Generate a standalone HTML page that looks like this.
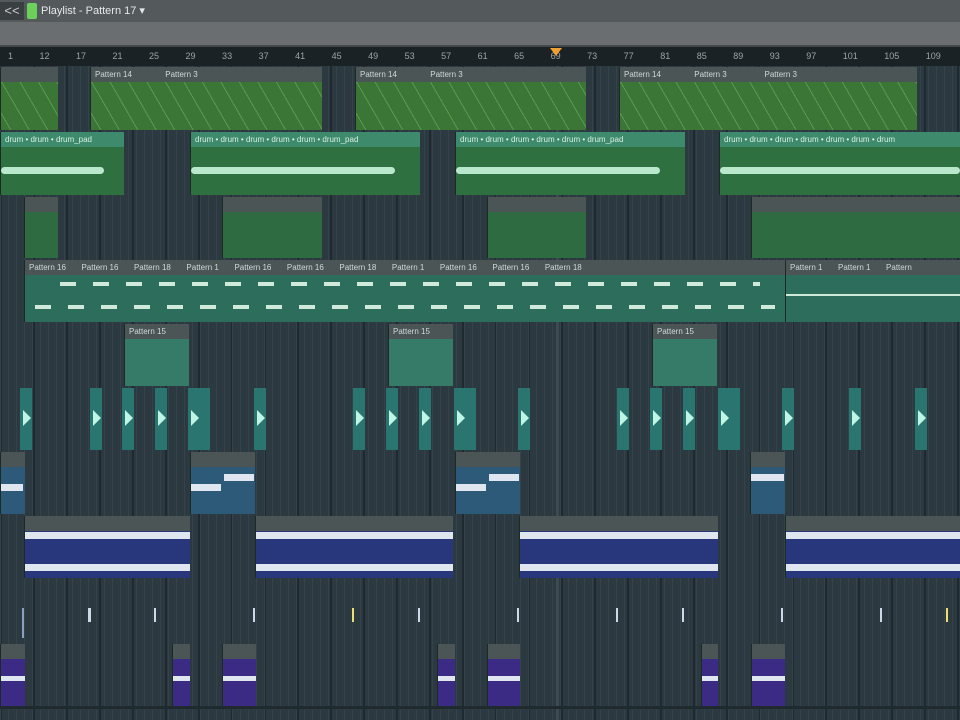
<!DOCTYPE html>
<html><head><meta charset="utf-8"><style>
*{margin:0;padding:0;box-sizing:border-box}
body{width:960px;height:720px;overflow:hidden;background:#2d3a41;font-family:"Liberation Sans",sans-serif;position:relative}
div{position:absolute}
.grid{left:0;top:66px;width:960px;height:654px;background:repeating-linear-gradient(90deg,#34434a 0 1px,transparent 1px 8px),repeating-linear-gradient(90deg,#1f2a30 0 2px,#2c3940 2px 33px)}
.rowsep{left:0;width:960px;height:2px;background:#1f2a2f}
.c{overflow:hidden;border-left:1px solid #1c2a25}
.h{left:0;top:0;right:0;height:15px;background:#4b5556;color:#cfd8dc;font-size:8px;line-height:15px;padding-left:4px;white-space:nowrap;overflow:hidden}
.g1{background:repeating-linear-gradient(60deg,#3b7636 0 8px,#5a9a50 8px 9px,#3b7636 9px 16px)}
.au{background:#2f7040}
.au .h{background:#3d8a6c;color:#d8f0e0}
.wv{left:0;right:0;top:35px;height:7px;background:#b9e8cc;border-radius:4px}
.g3{background:#2f6b40}
.t4{background:#2c6d5b}
.t5{background:#367a68}
.sm{background:#2a7570;width:12px;height:62px}
.sm:after{content:"";position:absolute;left:3px;top:22px;border-left:8px solid #bff5e4;border-top:8px solid transparent;border-bottom:8px solid transparent}
.b7{background:#2c5a78}
.b8{background:#28377c}
.p{background:#3b2b85}
.wb{background:#dfe6f0;height:7px}
.nt{background:#cfe9da;height:4px}
</style></head><body>
<div style="left:0;top:0;width:960px;height:22px;background:#54595c"></div>
<div style="left:0;top:2px;width:24px;height:18px;background:#3a3f42;color:#ccc;font-size:13px;line-height:18px;text-align:center">&lt;&lt;</div>
<div style="left:27px;top:3px;width:10px;height:16px;background:#6bd15a;border-radius:2px"></div>
<div style="left:41px;top:3px;color:#e6e8ea;font-size:11px;line-height:16px">Playlist - Pattern 17 ▾</div>
<div style="left:0;top:22px;width:960px;height:23px;background:#6a6e71"></div>
<div style="left:0;top:45px;width:960px;height:2px;background:#42474a"></div>
<div style="left:0;top:47px;width:960px;height:19px;background:#1a2226;color:#9aa4a8;font-size:9px;line-height:19px;white-space:nowrap;word-spacing:24px;padding-left:8px;overflow:hidden">1 12 17 21 25 29 33 37 41 45 49 53 57 61 65 69 73 77 81 85 89 93 97 101 105 109 113 117 121</div>
<div style="left:550px;top:48px;border-left:6px solid transparent;border-right:6px solid transparent;border-top:8px solid #f0a030"></div>
<div class="grid"></div>
<div style="left:556px;top:66px;width:3px;height:654px;background:#3d4a50"></div>

<!-- row1 -->
<div class="c g1" style="left:0;top:67px;width:58px;height:63px"><div class="h"></div></div>
<div class="c g1" style="left:90px;top:67px;width:232px;height:63px"><div class="h">Pattern 14 &nbsp; &nbsp; &nbsp; &nbsp; &nbsp; &nbsp; &nbsp; Pattern 3</div></div>
<div class="c g1" style="left:355px;top:67px;width:231px;height:63px"><div class="h">Pattern 14 &nbsp; &nbsp; &nbsp; &nbsp; &nbsp; &nbsp; &nbsp; Pattern 3</div></div>
<div class="c g1" style="left:619px;top:67px;width:298px;height:63px"><div class="h">Pattern 14 &nbsp; &nbsp; &nbsp; &nbsp; &nbsp; &nbsp; &nbsp; Pattern 3 &nbsp; &nbsp; &nbsp; &nbsp; &nbsp; &nbsp; &nbsp; &nbsp; Pattern 3</div></div>
<!-- row2 -->
<div class="c au" style="left:0;top:132px;width:124px;height:63px"><div class="h">drum • drum • drum_pad</div><div class="wv" style="right:20px"></div></div>
<div class="c au" style="left:190px;top:132px;width:230px;height:63px"><div class="h">drum • drum • drum • drum • drum • drum_pad</div><div class="wv" style="right:25px"></div></div>
<div class="c au" style="left:455px;top:132px;width:230px;height:63px"><div class="h">drum • drum • drum • drum • drum • drum_pad</div><div class="wv" style="right:25px"></div></div>
<div class="c au" style="left:719px;top:132px;width:241px;height:63px"><div class="h">drum • drum • drum • drum • drum • drum • drum</div><div class="wv"></div></div>
<!-- row3 -->
<div class="c g3" style="left:24px;top:197px;width:34px;height:61px"><div class="h"></div></div>
<div class="c g3" style="left:222px;top:197px;width:100px;height:61px"><div class="h"></div></div>
<div class="c g3" style="left:487px;top:197px;width:99px;height:61px"><div class="h"></div></div>
<div class="c g3" style="left:751px;top:197px;width:209px;height:61px"><div class="h"></div></div>
<!-- row4 -->
<div class="c t4" style="left:24px;top:260px;width:761px;height:62px"><div class="h">Pattern 16 &nbsp; &nbsp; &nbsp; Pattern 16 &nbsp; &nbsp; &nbsp; Pattern 18 &nbsp; &nbsp; &nbsp; Pattern 1 &nbsp; &nbsp; &nbsp; Pattern 16 &nbsp; &nbsp; &nbsp; Pattern 16 &nbsp; &nbsp; &nbsp; Pattern 18 &nbsp; &nbsp; &nbsp; Pattern 1 &nbsp; &nbsp; &nbsp; Pattern 16 &nbsp; &nbsp; &nbsp; Pattern 16 &nbsp; &nbsp; &nbsp; Pattern 18</div>
<div class="nt" style="left:35px;top:22px;width:700px;background:repeating-linear-gradient(90deg,#cfe9da 0 16px,transparent 16px 33px)"></div>
<div class="nt" style="left:10px;top:45px;width:740px;background:repeating-linear-gradient(90deg,#cfe9da 0 16px,transparent 16px 33px)"></div></div>
<div class="c t4" style="left:785px;top:260px;width:175px;height:62px"><div class="h">Pattern 1 &nbsp; &nbsp; &nbsp; Pattern 1 &nbsp; &nbsp; &nbsp; Pattern</div>
<div class="nt" style="left:0;top:34px;width:175px;height:2px"></div></div>
<!-- row5 -->
<div class="c t5" style="left:124px;top:324px;width:65px;height:62px"><div class="h">Pattern 15</div></div>
<div class="c t5" style="left:388px;top:324px;width:65px;height:62px"><div class="h">Pattern 15</div></div>
<div class="c t5" style="left:652px;top:324px;width:65px;height:62px"><div class="h">Pattern 15</div></div>
<!-- row6 -->
<div class="sm" style="left:20px;top:388px"></div><div class="sm" style="left:90px;top:388px"></div><div class="sm" style="left:122px;top:388px"></div><div class="sm" style="left:155px;top:388px"></div><div class="sm" style="left:188px;top:388px;width:22px"></div><div class="sm" style="left:254px;top:388px"></div><div class="sm" style="left:353px;top:388px"></div><div class="sm" style="left:386px;top:388px"></div><div class="sm" style="left:419px;top:388px"></div><div class="sm" style="left:454px;top:388px;width:22px"></div><div class="sm" style="left:518px;top:388px"></div><div class="sm" style="left:617px;top:388px"></div><div class="sm" style="left:650px;top:388px"></div><div class="sm" style="left:683px;top:388px"></div><div class="sm" style="left:718px;top:388px;width:22px"></div><div class="sm" style="left:782px;top:388px"></div><div class="sm" style="left:849px;top:388px"></div><div class="sm" style="left:915px;top:388px"></div>
<!-- row7 -->
<div class="c b7" style="left:0;top:452px;width:25px;height:62px"><div class="h"></div><div class="wb" style="left:0;top:32px;width:22px"></div></div>
<div class="c b7" style="left:190px;top:452px;width:65px;height:62px"><div class="h"></div><div class="wb" style="left:0;top:32px;width:30px"></div><div class="wb" style="left:33px;top:22px;width:30px"></div></div>
<div class="c b7" style="left:455px;top:452px;width:65px;height:62px"><div class="h"></div><div class="wb" style="left:0;top:32px;width:30px"></div><div class="wb" style="left:33px;top:22px;width:30px"></div></div>
<div class="c b7" style="left:750px;top:452px;width:35px;height:62px"><div class="h"></div><div class="wb" style="left:0;top:22px;width:33px"></div></div>
<!-- row8 -->
<div class="c b8" style="left:24px;top:516px;width:166px;height:62px"><div class="h"></div><div class="wb" style="left:0;top:16px;width:166px"></div><div class="wb" style="left:0;top:48px;width:166px"></div></div>
<div class="c b8" style="left:255px;top:516px;width:198px;height:62px"><div class="h"></div><div class="wb" style="left:0;top:16px;width:198px"></div><div class="wb" style="left:0;top:48px;width:198px"></div></div>
<div class="c b8" style="left:519px;top:516px;width:199px;height:62px"><div class="h"></div><div class="wb" style="left:0;top:16px;width:199px"></div><div class="wb" style="left:0;top:48px;width:199px"></div></div>
<div class="c b8" style="left:785px;top:516px;width:175px;height:62px"><div class="h"></div><div class="wb" style="left:0;top:16px;width:175px"></div><div class="wb" style="left:0;top:48px;width:175px"></div></div>
<!-- row9 thin -->
<div style="left:22px;top:608px;width:2px;height:30px;background:#8aa0c0"></div><div style="left:88px;top:608px;width:3px;height:14px;background:#cfd8e8"></div><div style="left:154px;top:608px;width:2px;height:14px;background:#cfd8e8"></div><div style="left:253px;top:608px;width:2px;height:14px;background:#cfd8e8"></div><div style="left:352px;top:608px;width:2px;height:14px;background:#e8e070"></div><div style="left:418px;top:608px;width:2px;height:14px;background:#cfd8e8"></div><div style="left:517px;top:608px;width:2px;height:14px;background:#cfd8e8"></div><div style="left:616px;top:608px;width:2px;height:14px;background:#cfd8e8"></div><div style="left:682px;top:608px;width:2px;height:14px;background:#cfd8e8"></div><div style="left:781px;top:608px;width:2px;height:14px;background:#cfd8e8"></div><div style="left:880px;top:608px;width:2px;height:14px;background:#cfd8e8"></div><div style="left:946px;top:608px;width:2px;height:14px;background:#e8e070"></div>
<!-- row10 -->
<div class="c p" style="left:0;top:644px;width:25px;height:62px"><div class="h"></div><div class="wb" style="left:0;top:32px;width:25px;height:5px"></div></div>
<div class="c p" style="left:172px;top:644px;width:18px;height:62px"><div class="h"></div><div class="wb" style="left:0;top:32px;width:18px;height:5px"></div></div>
<div class="c p" style="left:222px;top:644px;width:34px;height:62px"><div class="h"></div><div class="wb" style="left:0;top:32px;width:34px;height:5px"></div></div>
<div class="c p" style="left:437px;top:644px;width:18px;height:62px"><div class="h"></div><div class="wb" style="left:0;top:32px;width:18px;height:5px"></div></div>
<div class="c p" style="left:487px;top:644px;width:33px;height:62px"><div class="h"></div><div class="wb" style="left:0;top:32px;width:33px;height:5px"></div></div>
<div class="c p" style="left:701px;top:644px;width:17px;height:62px"><div class="h"></div><div class="wb" style="left:0;top:32px;width:17px;height:5px"></div></div>
<div class="c p" style="left:751px;top:644px;width:34px;height:62px"><div class="h"></div><div class="wb" style="left:0;top:32px;width:34px;height:5px"></div></div>
<div class="rowsep" style="top:706px;height:3px"></div>
</body></html>
